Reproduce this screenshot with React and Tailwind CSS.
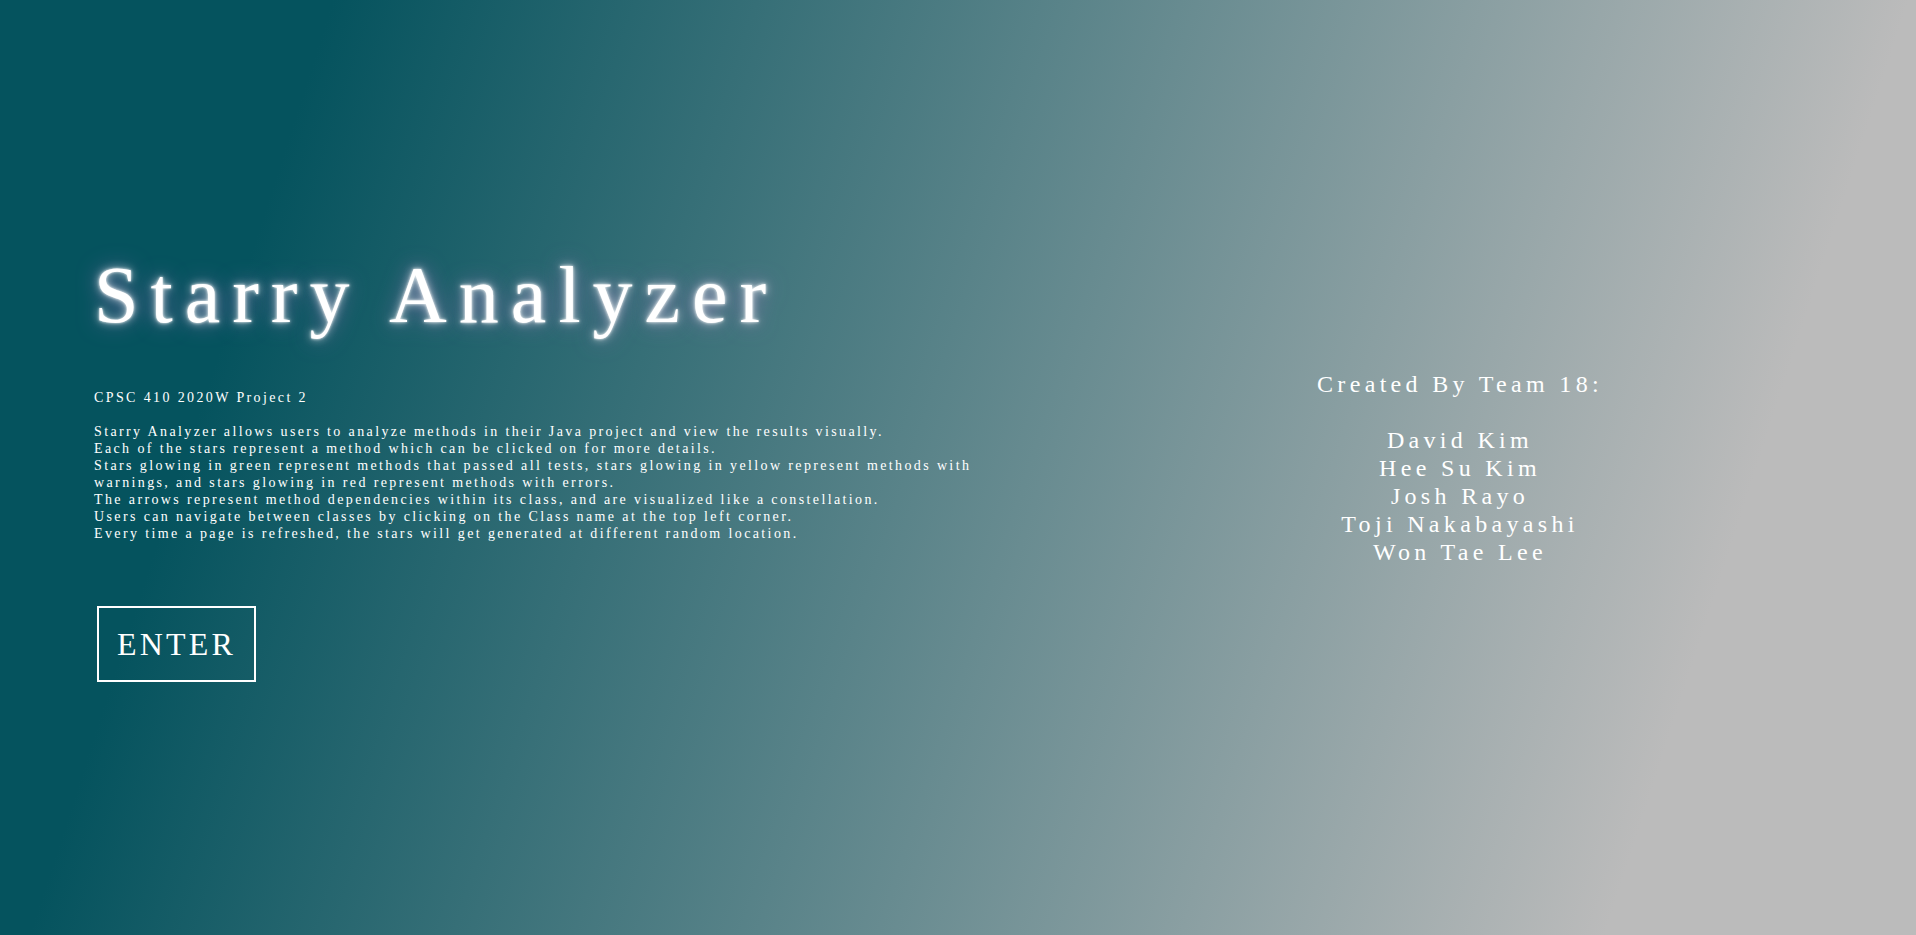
import React from 'react';

const team = ['David Kim', 'Hee Su Kim', 'Josh Rayo', 'Toji Nakabayashi', 'Won Tae Lee'];

const description = [
  'Starry Analyzer allows users to analyze methods in their Java project and view the results visually.',
  'Each of the stars represent a method which can be clicked on for more details.',
  'Stars glowing in green represent methods that passed all tests, stars glowing in yellow represent methods with warnings, and stars glowing in red represent methods with errors.',
  'The arrows represent method dependencies within its class, and are visualized like a constellation.',
  'Users can navigate between classes by clicking on the Class name at the top left corner.',
  'Every time a page is refreshed, the stars will get generated at different random location.',
];

const App = () => {
  return (
    <div className="h-[935px] w-full overflow-hidden bg-[linear-gradient(108deg,#05535e_15%,#bbbbbb_86%)] font-['Liberation_Serif','Times_New_Roman',serif] text-white">
      <div className="flex h-full items-center">
        {/* Left: title, description, enter */}
        <div className="w-[1004px] pb-[5px] pl-[94px]">
          <h1 className="text-[80px] leading-[92px] tracking-[0.15em] [text-shadow:0_0_3px_#fff,0_0_8px_rgba(255,255,255,0.75),0_0_22px_rgba(185,120,205,0.75)]">
            Starry Analyzer
          </h1>

          <div className="mt-[48px] w-[900px] text-[14px] leading-[17px] tracking-[0.17em]">
            <p>CPSC 410 2020W Project 2</p>
            <br />
            {description.map((line) => (
              <p key={line}>{line}</p>
            ))}
          </div>

          <button className="mt-[64px] ml-[3px] border-2 border-white px-[18px] py-[17px] text-[32px] leading-[38px] tracking-[0.1em] text-white">
            ENTER
          </button>
        </div>

        {/* Right: team */}
        <div className="flex-1 text-center text-[24px] leading-[28px] tracking-[0.18em]">
          <p>Created By Team 18:</p>
          <br />
          {team.map((name) => (
            <p key={name}>{name}</p>
          ))}
        </div>
      </div>
    </div>
  );
};

export default App;
